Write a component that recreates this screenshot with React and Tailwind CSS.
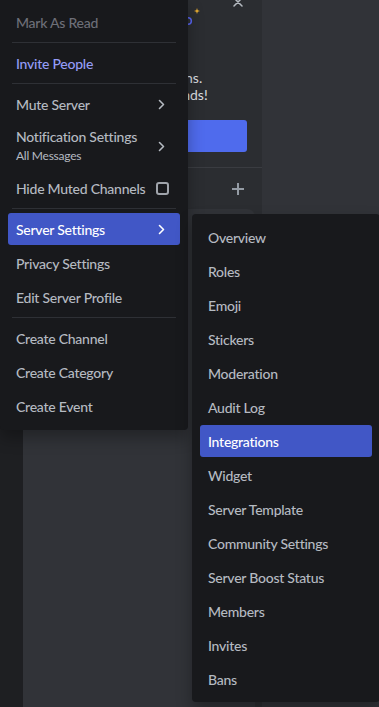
import React from 'react';

const Chevron = ({ className }) => (
  <svg width="7" height="11" viewBox="0 0 7 11" fill="none" className={className}>
    <path d="M1.5 1.5 L5.5 5.5 L1.5 9.5" stroke="currentColor" strokeWidth="1.6" strokeLinecap="round" strokeLinejoin="round" />
  </svg>
);

const Sep = () => <div className="mx-3 my-0.5 h-px bg-[#2e3035]" />;

const Item = ({ label, active, muted, blue, chevron, checkbox }) => (
  <div
    className={`mx-2 flex h-8 items-center justify-between rounded-[3px] px-2 text-[14px] font-medium tracking-[-0.25px] ${
      active ? 'bg-[#4157c6] text-white' : muted ? 'text-[#6d6f78]' : blue ? 'text-[#949cf7]' : 'text-[#b5bac1]'
    }`}
  >
    <span>{label}</span>
    {chevron && <Chevron className="mr-[7px]" />}
    {checkbox && <div className="mr-[3px] h-[13px] w-[13px] rounded-[3px] border-2 border-[#a0a4ab]" />}
  </div>
);

const settings = [
  'Overview',
  'Roles',
  'Emoji',
  'Stickers',
  'Moderation',
  'Audit Log',
  'Integrations',
  'Widget',
  'Server Template',
  'Community Settings',
  'Server Boost Status',
  'Members',
  'Invites',
  'Bans',
];

export default function App() {
  return (
    <div className="relative h-[707px] w-[379px] overflow-hidden bg-[#313338] font-['Lato','Noto_Sans',sans-serif]">
      <div className="flex h-full">
        <div className="w-[23px] bg-[#1e1f22]" />

        {/* channel list */}
        <div className="flex w-[239px] flex-col bg-[#2b2d31]">
          <div className="relative h-[167px]">
            <svg className="absolute left-[210px] top-[-3px]" width="10" height="10" viewBox="0 0 10 10">
              <path d="M1 1 L9 9 M9 1 L1 9" stroke="#b5bac1" strokeWidth="1.5" strokeLinecap="round" />
            </svg>
            <svg className="absolute left-[171px] top-[8px]" width="6" height="6" viewBox="0 0 6 6">
              <path d="M3 0 L3.7 2.3 L6 3 L3.7 3.7 L3 6 L2.3 3.7 L0 3 L2.3 2.3 Z" fill="#f0b232" />
            </svg>
            <svg className="absolute left-[160px] top-[16px]" width="10" height="10" viewBox="0 0 10 10">
              <circle cx="5" cy="5" r="3.3" fill="none" stroke="#5865f2" strokeWidth="1.6" />
            </svg>
            <div className="absolute left-0 right-0 top-[69px] pr-[10px] text-center text-[14px] leading-[17px] text-[#dbdee1]">
              <div>An adventure begins.</div>
              <div>Let&apos;s add some friends!</div>
            </div>
            <div className="absolute left-[15px] right-[15px] top-[120px] flex h-8 items-center justify-center rounded-[3px] bg-[#4f6bed] text-[14px] font-medium text-white">
              Invite People
            </div>
          </div>
          <div className="h-px bg-[#3a3c41]" />
          <div className="flex h-[41px] items-center justify-end pr-[18px]">
            <svg width="12" height="12" viewBox="0 0 12 12">
              <path d="M6 0 V12 M0 6 H12" stroke="#949ba4" strokeWidth="2" />
            </svg>
          </div>
          <div className="mr-[7px] flex-1 rounded-tr-[8px] bg-[#313338]" />
        </div>

        <div className="flex-1 bg-[#313338]" />
      </div>

      {/* server menu */}
      <div className="absolute left-0 top-0 flex w-[188px] flex-col gap-[2px] rounded-b-[4px] bg-[#18191c] pb-[8px] pt-[6px] shadow-[0_8px_16px_rgba(0,0,0,0.3)]">
        <Item label="Mark As Read" muted />
        <Sep />
        <Item label="Invite People" blue />
        <Sep />
        <Item label="Mute Server" chevron />
        <div className="mx-2 flex h-12 items-center justify-between px-2 text-[#b5bac1]">
          <div className="flex flex-col tracking-[-0.25px]">
            <span className="text-[14px] font-medium leading-[20px]">Notification Settings</span>
            <span className="text-[12px] leading-[18px]">All Messages</span>
          </div>
          <Chevron className="mr-[7px]" />
        </div>
        <Item label="Hide Muted Channels" checkbox />
        <Sep />
        <Item label="Server Settings" active chevron />
        <Item label="Privacy Settings" />
        <Item label="Edit Server Profile" />
        <Sep />
        <Item label="Create Channel" />
        <Item label="Create Category" />
        <Item label="Create Event" />
      </div>

      {/* server settings submenu */}
      <div className="absolute left-[192px] top-[214px] flex w-[188px] flex-col gap-[2px] rounded-[4px] bg-[#18191c] pb-[7px] pt-[7px] shadow-[0_8px_16px_rgba(0,0,0,0.3)]">
        {settings.map((s) => (
          <Item key={s} label={s} active={s === 'Integrations'} />
        ))}
      </div>
    </div>
  );
}
